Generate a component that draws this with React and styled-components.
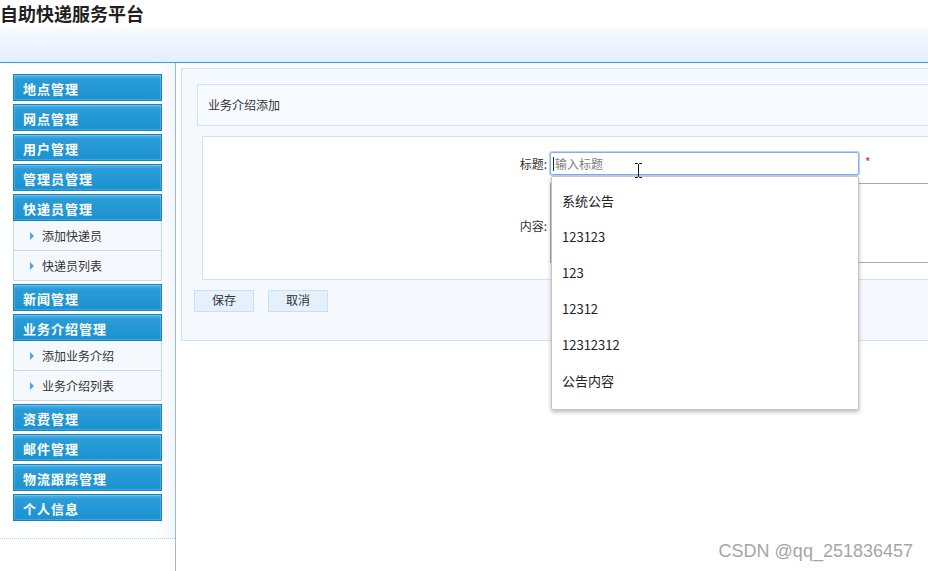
import React from "react";
import styled, { createGlobalStyle } from "styled-components";

const GlobalStyle = createGlobalStyle`
  html, body {
    margin: 0;
    padding: 0;
    overflow: hidden;
    background: #fff;
    font-family: "Noto Sans CJK SC", "Noto Sans", sans-serif;
  }
`;

const Page = styled.div`
  width: 928px;
  height: 571px;
  display: flex;
  flex-direction: column;
  position: relative;
`;

const Title = styled.h1`
  margin: 0;
  height: 27px;
  line-height: 26px;
  font-size: 18px;
  font-weight: bold;
  color: #231f1f;
`;

const Band = styled.div`
  height: 35px;
  background: linear-gradient(#f8fbff, #e2effd);
  border-bottom: 1px solid #3d9be0;
`;

const Body = styled.div`
  flex: 1;
  display: flex;
  min-height: 0;
`;

const Sidebar = styled.aside`
  width: 175px;
  flex-shrink: 0;
  border-right: 1px solid #93bbdc;
`;

const Menu = styled.nav`
  padding: 11px 0 17px 13px;
  border-bottom: 1px dotted #b9cfdf;
  background: linear-gradient(to right, #fff 88%, #f4f8fe);
  display: flex;
  flex-direction: column;
  gap: 3px;
`;

const MenuHead = styled.div`
  width: 149px;
  height: 27px;
  box-sizing: border-box;
  border: 1px solid #1583c4;
  background: linear-gradient(#57b4e6 0, #2a9cd8 4px, #1b92d1 100%);
  box-shadow: inset 0 0 0 1px rgba(255, 255, 255, 0.18);
  color: #fff;
  font-size: 13px;
  font-weight: bold;
  letter-spacing: 1px;
  line-height: 27px;
  padding-left: 9px;
`;

const SubGroup = styled.div`
  width: 149px;
  box-sizing: border-box;
  border: 1px solid #c6dae7;
  border-top: none;
  background: #f5f9fe;
  margin-top: -3px;
`;

const SubItem = styled.div`
  height: 29px;
  display: flex;
  align-items: center;
  padding-left: 16px;
  font-size: 12px;
  color: #333;
  & + & {
    border-top: 1px solid #c6dae7;
  }
`;

const Arrow = styled.span`
  width: 0;
  height: 0;
  border-left: 4px solid #4da7e2;
  border-top: 4px solid transparent;
  border-bottom: 4px solid transparent;
  margin-right: 8px;
`;

const Main = styled.main`
  flex: 1;
  overflow: hidden;
  padding: 5px 0 0 5px;
`;

const Panel = styled.section`
  width: 800px;
  border: 1px solid #cde3f7;
  background: #f5f9fe;
  padding: 15px 0 28px 12px;
`;

const PanelHead = styled.div`
  margin-left: 3px;
  height: 40px;
  line-height: 40px;
  border: 1px solid #cde3f7;
  background: #f7faff;
  padding-left: 10px;
  font-size: 12px;
  color: #333;
`;

const FormBox = styled.div`
  margin: 10px 0 0 8px;
  border: 1px solid #cde3f7;
  background: #fff;
  padding-top: 15px;
  height: 127px;
`;

const FormRow = styled.div`
  display: grid;
  grid-template-columns: 344px auto;
  column-gap: 3px;
  align-items: start;
  margin-top: ${(p) => p.$gap || 0}px;
`;

const Label = styled.label`
  text-align: right;
  font-size: 12px;
  color: #333;
  line-height: ${(p) => p.$lh || 23}px;
`;

const Field = styled.div`
  position: relative;
  display: flex;
  align-items: flex-start;
`;

const InputBox = styled.div`
  width: 309px;
  height: 23px;
  box-sizing: border-box;
  border: 1px solid #7eaff0;
  border-radius: 2px;
  box-shadow: 0 0 0 1px #b9d4f8;
  display: flex;
  align-items: center;
  padding-left: 2px;
  font-size: 12px;
  color: #808080;
`;

const Caret = styled.span`
  width: 1px;
  height: 14px;
  background: #222;
  margin-right: 1px;
`;

const Star = styled.span`
  color: #e31c1c;
  font-size: 12px;
  margin-left: 6px;
  line-height: 20px;
`;

const TextArea = styled.div`
  width: 420px;
  height: 80px;
  box-sizing: border-box;
  border: 1px solid #a9a9a9;
`;

const Suggest = styled.ul`
  position: absolute;
  top: 24px;
  left: 1px;
  width: 308px;
  box-sizing: border-box;
  margin: 0;
  padding: 6px 0 10px;
  list-style: none;
  background: #fff;
  border: 1px solid #c4c4c4;
  border-radius: 2px;
  box-shadow: 0 2px 4px rgba(0, 0, 0, 0.28);
  z-index: 5;
`;

const SuggestItem = styled.li`
  height: 36px;
  line-height: 36px;
  padding-left: 10px;
  font-size: 13px;
  color: #222;
`;

const IBeam = styled.svg`
  position: absolute;
  left: 84px;
  top: 11px;
  z-index: 6;
`;

const Actions = styled.div`
  display: flex;
  gap: 14px;
  margin-top: 10px;
`;

const Button = styled.button`
  width: 60px;
  height: 22px;
  box-sizing: border-box;
  border: 1px solid #c6e0f7;
  background: #e4f1fd;
  color: #333;
  font-size: 12px;
  font-family: inherit;
  line-height: 18px;
  padding: 0 0 2px;
`;

const Watermark = styled.div`
  position: absolute;
  right: 15px;
  bottom: 9px;
  font-family: "Liberation Sans", Arial, sans-serif;
  font-size: 18px;
  color: #a6a6a6;
`;

const menu = [
  { title: "地点管理" },
  { title: "网点管理" },
  { title: "用户管理" },
  { title: "管理员管理" },
  { title: "快递员管理", subs: ["添加快递员", "快递员列表"] },
  { title: "新闻管理" },
  { title: "业务介绍管理", subs: ["添加业务介绍", "业务介绍列表"] },
  { title: "资费管理" },
  { title: "邮件管理" },
  { title: "物流跟踪管理" },
  { title: "个人信息" },
];

const suggestions = ["系统公告", "123123", "123", "12312", "12312312", "公告内容"];

export default function App() {
  return (
    <Page>
      <GlobalStyle />
      <Title>自助快递服务平台</Title>
      <Band />
      <Body>
        <Sidebar>
          <Menu>
            {menu.map((m) => (
              <React.Fragment key={m.title}>
                <MenuHead>{m.title}</MenuHead>
                {m.subs && (
                  <SubGroup>
                    {m.subs.map((s) => (
                      <SubItem key={s}>
                        <Arrow />
                        {s}
                      </SubItem>
                    ))}
                  </SubGroup>
                )}
              </React.Fragment>
            ))}
          </Menu>
        </Sidebar>
        <Main>
          <Panel>
            <PanelHead>业务介绍添加</PanelHead>
            <FormBox>
              <FormRow>
                <Label>标题:</Label>
                <Field>
                  <InputBox>
                    <Caret />
                    输入标题
                  </InputBox>
                  <Star>*</Star>
                  <IBeam width="9" height="15" viewBox="0 0 9 15">
                    <path d="M1 0.5h2.5l1 1 1-1H8M4.5 1.5v12M1 14.5h2.5l1-1 1 1H8" fill="none" stroke="#111" strokeWidth="1" />
                  </IBeam>
                  <Suggest>
                    {suggestions.map((s) => (
                      <SuggestItem key={s}>{s}</SuggestItem>
                    ))}
                  </Suggest>
                </Field>
              </FormRow>
              <FormRow $gap={8}>
                <Label $lh={86}>内容:</Label>
                <TextArea />
              </FormRow>
            </FormBox>
            <Actions>
              <Button>保存</Button>
              <Button>取消</Button>
            </Actions>
          </Panel>
        </Main>
      </Body>
      <Watermark>CSDN @qq_251836457</Watermark>
    </Page>
  );
}
